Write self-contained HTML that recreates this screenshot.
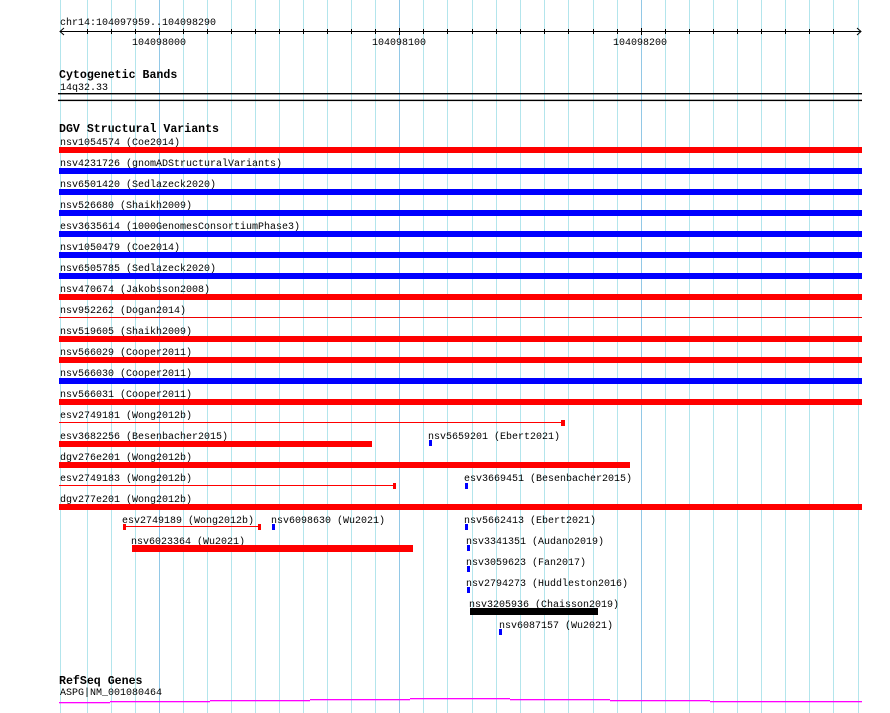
<!DOCTYPE html>
<html><head><meta charset="utf-8"><style>
html,body{margin:0;padding:0;background:#fff;}
svg{display:block;}
text{font-family:"Liberation Mono","DejaVu Sans Mono",monospace;font-size:10px;fill:#000;}
.b{font-weight:bold;font-size:11.6px;}
</style></head><body>
<svg width="890" height="713" xmlns="http://www.w3.org/2000/svg">
<g id="grid"></g>
<g stroke="#b3e5ec" stroke-width="1">
<line x1="60.5" y1="0" x2="60.5" y2="713"/>
<line x1="87.5" y1="0" x2="87.5" y2="713"/>
<line x1="111.5" y1="0" x2="111.5" y2="713"/>
<line x1="135.5" y1="0" x2="135.5" y2="713"/>
<line x1="183.5" y1="0" x2="183.5" y2="713"/>
<line x1="207.5" y1="0" x2="207.5" y2="713"/>
<line x1="231.5" y1="0" x2="231.5" y2="713"/>
<line x1="255.5" y1="0" x2="255.5" y2="713"/>
<line x1="279.5" y1="0" x2="279.5" y2="713"/>
<line x1="303.5" y1="0" x2="303.5" y2="713"/>
<line x1="327.5" y1="0" x2="327.5" y2="713"/>
<line x1="351.5" y1="0" x2="351.5" y2="713"/>
<line x1="375.5" y1="0" x2="375.5" y2="713"/>
<line x1="423.5" y1="0" x2="423.5" y2="713"/>
<line x1="447.5" y1="0" x2="447.5" y2="713"/>
<line x1="472.5" y1="0" x2="472.5" y2="713"/>
<line x1="496.5" y1="0" x2="496.5" y2="713"/>
<line x1="520.5" y1="0" x2="520.5" y2="713"/>
<line x1="544.5" y1="0" x2="544.5" y2="713"/>
<line x1="568.5" y1="0" x2="568.5" y2="713"/>
<line x1="593.5" y1="0" x2="593.5" y2="713"/>
<line x1="617.5" y1="0" x2="617.5" y2="713"/>
<line x1="665.5" y1="0" x2="665.5" y2="713"/>
<line x1="689.5" y1="0" x2="689.5" y2="713"/>
<line x1="713.5" y1="0" x2="713.5" y2="713"/>
<line x1="737.5" y1="0" x2="737.5" y2="713"/>
<line x1="761.5" y1="0" x2="761.5" y2="713"/>
<line x1="785.5" y1="0" x2="785.5" y2="713"/>
<line x1="809.5" y1="0" x2="809.5" y2="713"/>
<line x1="833.5" y1="0" x2="833.5" y2="713"/>
<line x1="858.5" y1="0" x2="858.5" y2="713"/>
</g>
<g stroke="#92c8e6" stroke-width="1">
<line x1="159.5" y1="0" x2="159.5" y2="713"/>
<line x1="399.5" y1="0" x2="399.5" y2="713"/>
<line x1="641.5" y1="0" x2="641.5" y2="713"/>
</g>

<!-- ruler -->
<text x="60" y="25">chr14:104097959..104098290</text>
<g stroke="#000" stroke-width="1" fill="none">
<line x1="60" y1="31.5" x2="861" y2="31.5"/>
<polyline points="64,28 60,31.5 64,35"/>
<polyline points="857,28 861,31.5 857,35"/>
</g>
<g stroke="#000" stroke-width="1">
<line x1="87.5" y1="29" x2="87.5" y2="34"/><line x1="111.5" y1="29" x2="111.5" y2="34"/><line x1="135.5" y1="29" x2="135.5" y2="34"/><line x1="159.5" y1="28" x2="159.5" y2="35"/><line x1="183.5" y1="29" x2="183.5" y2="34"/><line x1="207.5" y1="29" x2="207.5" y2="34"/><line x1="231.5" y1="29" x2="231.5" y2="34"/><line x1="255.5" y1="29" x2="255.5" y2="34"/><line x1="279.5" y1="29" x2="279.5" y2="34"/><line x1="303.5" y1="29" x2="303.5" y2="34"/><line x1="327.5" y1="29" x2="327.5" y2="34"/><line x1="351.5" y1="29" x2="351.5" y2="34"/><line x1="375.5" y1="29" x2="375.5" y2="34"/><line x1="399.5" y1="28" x2="399.5" y2="35"/><line x1="423.5" y1="29" x2="423.5" y2="34"/><line x1="447.5" y1="29" x2="447.5" y2="34"/><line x1="472.5" y1="29" x2="472.5" y2="34"/><line x1="496.5" y1="29" x2="496.5" y2="34"/><line x1="520.5" y1="29" x2="520.5" y2="34"/><line x1="544.5" y1="29" x2="544.5" y2="34"/><line x1="568.5" y1="29" x2="568.5" y2="34"/><line x1="593.5" y1="29" x2="593.5" y2="34"/><line x1="617.5" y1="29" x2="617.5" y2="34"/><line x1="641.5" y1="28" x2="641.5" y2="35"/><line x1="665.5" y1="29" x2="665.5" y2="34"/><line x1="689.5" y1="29" x2="689.5" y2="34"/><line x1="713.5" y1="29" x2="713.5" y2="34"/><line x1="737.5" y1="29" x2="737.5" y2="34"/><line x1="761.5" y1="29" x2="761.5" y2="34"/><line x1="785.5" y1="29" x2="785.5" y2="34"/><line x1="809.5" y1="29" x2="809.5" y2="34"/><line x1="833.5" y1="29" x2="833.5" y2="34"/>
</g>
<text x="132" y="45">104098000</text>
<text x="372" y="45">104098100</text>
<text x="613" y="45">104098200</text>

<!-- cytogenetic -->
<text class="b" x="59" y="78">Cytogenetic Bands</text>
<text x="60" y="90">14q32.33</text>
<rect x="58" y="93" width="804" height="1.4" fill="#000"/>
<rect x="58" y="99.7" width="804" height="1.4" fill="#000"/>

<!-- DGV -->
<text class="b" x="59" y="132">DGV Structural Variants</text>
<text x="60" y="145">nsv1054574 (Coe2014)</text>
<rect x="59" y="147" width="803" height="6" fill="#f00"/>
<text x="60" y="166">nsv4231726 (gnomADStructuralVariants)</text>
<rect x="59" y="168" width="803" height="6" fill="#00f"/>
<text x="60" y="187">nsv6501420 (Sedlazeck2020)</text>
<rect x="59" y="189" width="803" height="6" fill="#00f"/>
<text x="60" y="208">nsv526680 (Shaikh2009)</text>
<rect x="59" y="210" width="803" height="6" fill="#00f"/>
<text x="60" y="229">esv3635614 (1000GenomesConsortiumPhase3)</text>
<rect x="59" y="231" width="803" height="6" fill="#00f"/>
<text x="60" y="250">nsv1050479 (Coe2014)</text>
<rect x="59" y="252" width="803" height="6" fill="#00f"/>
<text x="60" y="271">nsv6505785 (Sedlazeck2020)</text>
<rect x="59" y="273" width="803" height="6" fill="#00f"/>
<text x="60" y="292">nsv470674 (Jakobsson2008)</text>
<rect x="59" y="294" width="803" height="6" fill="#f00"/>
<text x="60" y="313">nsv952262 (Dogan2014)</text>
<rect x="59" y="317" width="803" height="1" fill="#e00"/>
<text x="60" y="334">nsv519605 (Shaikh2009)</text>
<rect x="59" y="336" width="803" height="6" fill="#f00"/>
<text x="60" y="355">nsv566029 (Cooper2011)</text>
<rect x="59" y="357" width="803" height="6" fill="#f00"/>
<text x="60" y="376">nsv566030 (Cooper2011)</text>
<rect x="59" y="378" width="803" height="6" fill="#00f"/>
<text x="60" y="397">nsv566031 (Cooper2011)</text>
<rect x="59" y="399" width="803" height="6" fill="#f00"/>

<text x="60" y="418">esv2749181 (Wong2012b)</text>
<rect x="59" y="422" width="504" height="1" fill="#f00"/>
<rect x="561" y="420" width="4" height="6" fill="#f00"/>

<text x="60" y="439">esv3682256 (Besenbacher2015)</text>
<rect x="59" y="441" width="313" height="6" fill="#f00"/>
<text x="428" y="439">nsv5659201 (Ebert2021)</text>
<rect x="429" y="440" width="3" height="6" fill="#00f"/>

<text x="60" y="460">dgv276e201 (Wong2012b)</text>
<rect x="59" y="462" width="571" height="6" fill="#f00"/>

<text x="60" y="481">esv2749183 (Wong2012b)</text>
<rect x="59" y="485" width="335" height="1" fill="#f00"/>
<rect x="393" y="483" width="3" height="6" fill="#f00"/>
<text x="464" y="481">esv3669451 (Besenbacher2015)</text>
<rect x="465" y="483" width="3" height="6" fill="#00f"/>

<text x="60" y="502">dgv277e201 (Wong2012b)</text>
<rect x="59" y="504" width="803" height="6" fill="#f00"/>

<text x="122" y="523">esv2749189 (Wong2012b)</text>
<rect x="124" y="526" width="136" height="1" fill="#f00"/>
<rect x="123" y="524" width="3" height="6" fill="#f00"/>
<rect x="258" y="524" width="3" height="6" fill="#f00"/>
<text x="271" y="523">nsv6098630 (Wu2021)</text>
<rect x="272" y="524" width="3" height="6" fill="#00f"/>
<text x="464" y="523">nsv5662413 (Ebert2021)</text>
<rect x="465" y="524" width="3" height="6" fill="#00f"/>

<text x="131" y="544">nsv6023364 (Wu2021)</text>
<rect x="132" y="545" width="281" height="7" fill="#f00"/>
<text x="466" y="544">nsv3341351 (Audano2019)</text>
<rect x="467" y="545" width="3" height="6" fill="#00f"/>

<text x="466" y="565">nsv3059623 (Fan2017)</text>
<rect x="467" y="566" width="3" height="6" fill="#00f"/>
<text x="466" y="586">nsv2794273 (Huddleston2016)</text>
<rect x="467" y="587" width="3" height="6" fill="#00f"/>
<text x="469" y="607">nsv3205936 (Chaisson2019)</text>
<rect x="470" y="608" width="128" height="7" fill="#000"/>
<text x="499" y="628">nsv6087157 (Wu2021)</text>
<rect x="499" y="629" width="3" height="6" fill="#00f"/>

<!-- RefSeq -->
<text class="b" x="59" y="684">RefSeq Genes</text>
<text x="60" y="695">ASPG|NM_001080464</text>
<g fill="#f0f">
<rect x="59" y="702" width="51" height="1.3"/>
<rect x="110" y="701" width="100" height="1.3"/>
<rect x="210" y="700" width="100" height="1.3"/>
<rect x="310" y="699" width="100" height="1.3"/>
<rect x="410" y="698" width="100" height="1.3"/>
<rect x="510" y="699" width="100" height="1.3"/>
<rect x="610" y="700" width="100" height="1.3"/>
<rect x="710" y="701" width="100" height="1.3"/>
<rect x="810" y="701" width="52" height="1.3"/>
</g>
</svg>
</body></html>
